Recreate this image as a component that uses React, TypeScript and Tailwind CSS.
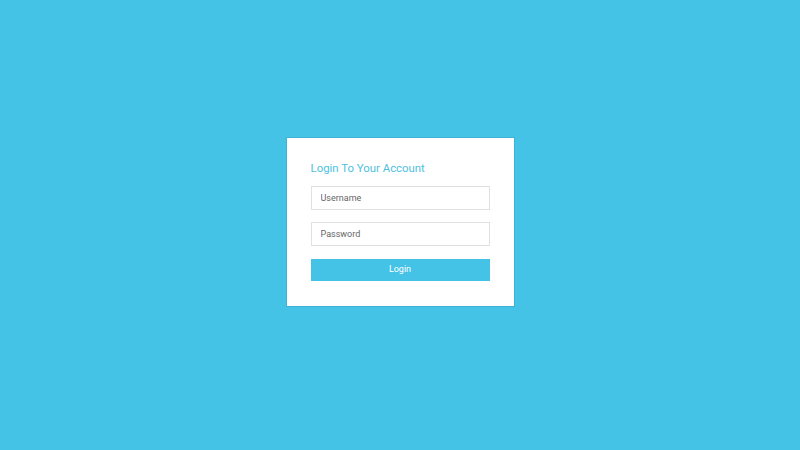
export default function App() {
  return (
    <div
      className="w-full h-screen bg-[#45c3e7] flex items-center justify-center pb-[6px]"
      style={{ fontFamily: 'Roboto, "Liberation Sans", sans-serif' }}
    >
      <div className="w-[229px] bg-white border border-[#3bb2d6] px-[24px] pt-[22px] pb-[25px] flex flex-col">
        <h1 className="text-[11.4px] leading-[16px] text-[#4fbfe0] font-normal mb-[10px]">
          Login To Your Account
        </h1>
        <input
          type="text"
          placeholder="Username"
          className="h-[24px] w-full border border-[#e0e0e0] px-[9px] text-[9px] text-[#555] placeholder:text-[#666] outline-none mb-[12px]"
        />
        <input
          type="password"
          placeholder="Password"
          className="h-[24px] w-full border border-[#e0e0e0] px-[9px] text-[9px] text-[#555] placeholder:text-[#666] outline-none mb-[13px]"
        />
        <button className="h-[22px] w-full bg-[#45c3e7] text-white text-[9px]">
          Login
        </button>
      </div>
    </div>
  );
}
